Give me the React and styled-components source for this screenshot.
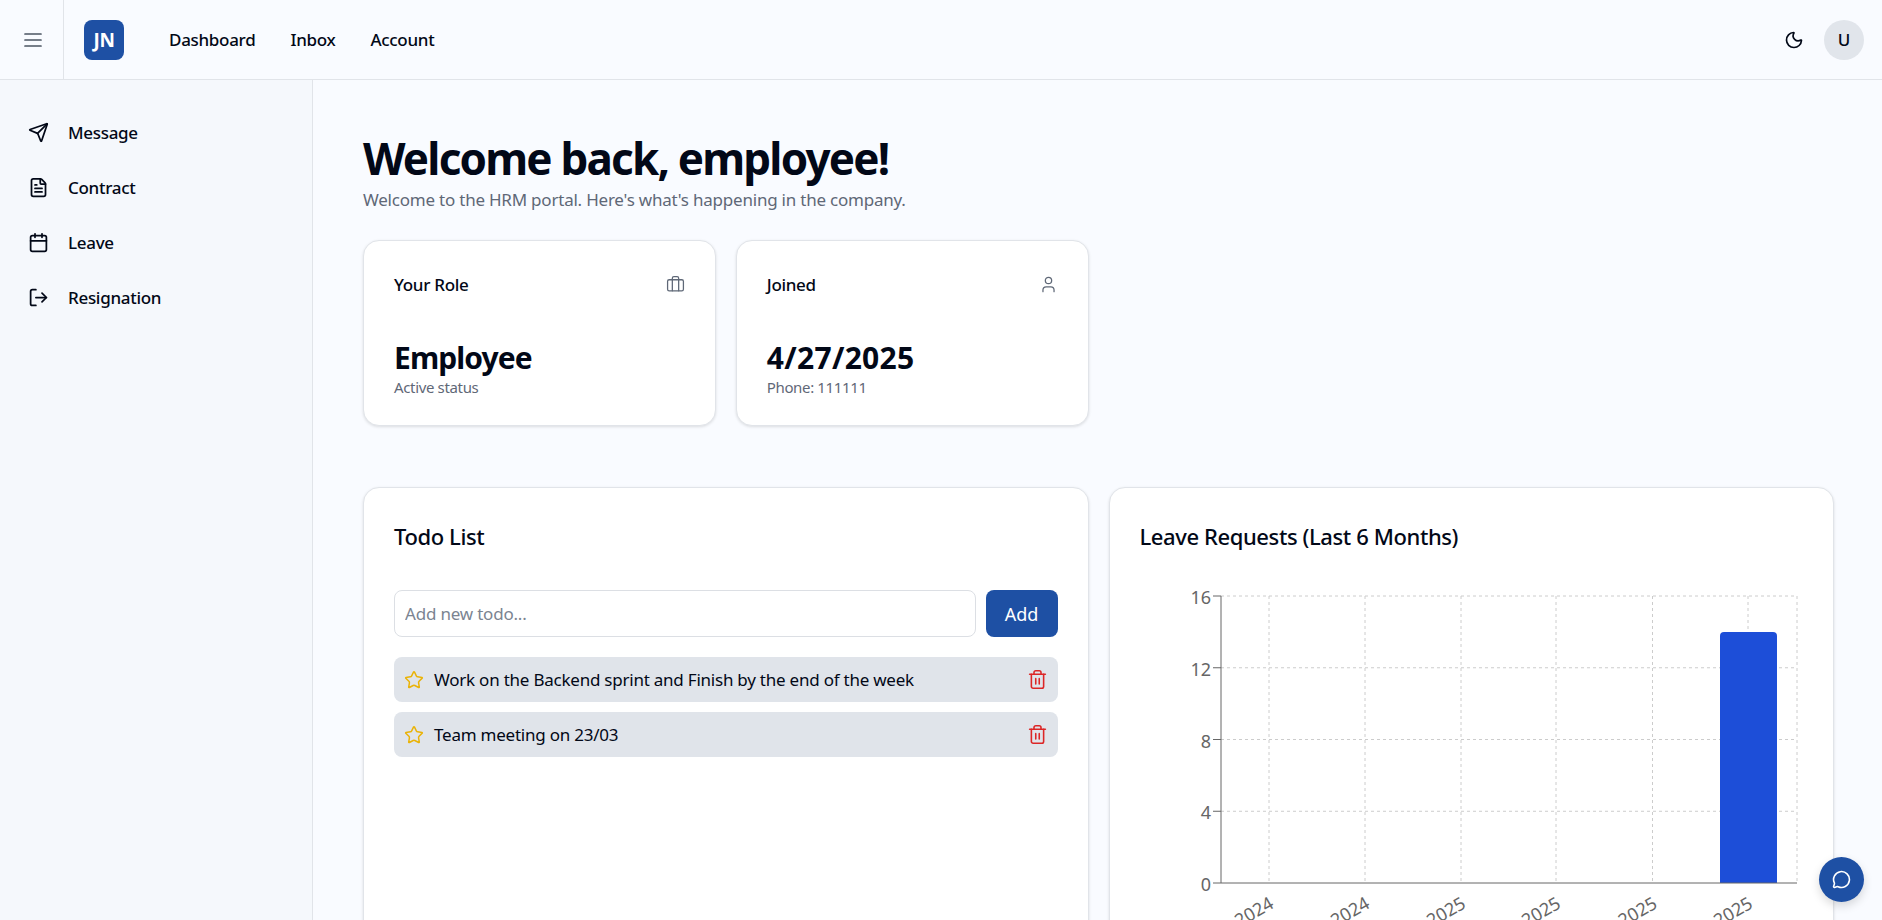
import styled, { createGlobalStyle } from "styled-components";
import { Moon, Send, FileText, Calendar, LogOut, Briefcase, User, Star, Trash2, MessageCircle } from "lucide-react";

const GlobalStyle = createGlobalStyle`
    * { box-sizing: border-box; }
    html, body { margin: 0; padding: 0; height: 100%; overflow: hidden; }
    body {
        font-family: "Noto Sans", "Open Sans", sans-serif;
        color: #020817;
        background: #f9fbff;
    }
`;

const sideLinks = [
    { label: "Message", Icon: Send },
    { label: "Contract", Icon: FileText },
    { label: "Leave", Icon: Calendar },
    { label: "Resignation", Icon: LogOut },
];

const todos = ["Work on the Backend sprint and Finish by the end of the week", "Team meeting on 23/03"];

const months = ["Nov 2024", "Dec 2024", "Jan 2025", "Feb 2025", "Mar 2025", "Apr 2025"];

function LeaveChart() {
    const left = 81, right = 657, top = 16, bottom = 303;
    const ticks = [16, 12, 8, 4, 0];
    const y = v => bottom - (v / 16) * (bottom - top);
    const xs = [129, 225, 321, 416, 512.5, 608];
    return (
        <svg width="662" height="360" viewBox="0 0 662 360">
            <g stroke="#ccc" strokeDasharray="3 3" fill="none">
                {ticks.slice(0, 4).map(v => <line key={v} x1={left} x2={right} y1={y(v)} y2={y(v)} />)}
                {xs.map(x => <line key={x} x1={x} x2={x} y1={top} y2={bottom} />)}
                <line x1={right} x2={right} y1={top} y2={bottom} />
            </g>
            <path d="M580 303V56a4 4 0 0 1 4-4h49a4 4 0 0 1 4 4v247z" fill="#1d4ed8" />
            <g stroke="#666" fill="none">
                <line x1={left} x2={left} y1={top} y2={bottom} />
                <line x1={left} x2={right} y1={bottom} y2={bottom} />
                {ticks.map(v => <line key={v} x1={left - 8} x2={left} y1={y(v)} y2={y(v)} />)}
            </g>
            <g fill="#666" fontSize="18" textAnchor="end">
                {ticks.map(v => <text key={v} x={left - 10} y={y(v) + 8}>{v}</text>)}
                {months.map((m, i) => (
                    <text key={m} x={xs[i] + 6} y={bottom + 24} transform={`rotate(-30 ${xs[i] + 6} ${bottom + 24})`}>{m}</text>
                ))}
            </g>
        </svg>
    );
}

export default function App() {
    return (
        <Page>
            <GlobalStyle />
            <Topbar>
                <MenuToggle>
                    <svg width="24" height="24" viewBox="0 0 24 24" fill="none" stroke="currentColor" strokeWidth="1.7" strokeLinecap="round">
                        <path d="M4 6h16M4 12h16M4 18h16" />
                    </svg>
                </MenuToggle>
                <Logo>JN</Logo>
                <TopNav>
                    <TopLink>Dashboard</TopLink>
                    <TopLink>Inbox</TopLink>
                    <TopLink>Account</TopLink>
                </TopNav>
                <TopActions>
                    <Moon size={20} strokeWidth={2} />
                    <Avatar>U</Avatar>
                </TopActions>
            </Topbar>
            <Body>
                <Sidebar>
                    {sideLinks.map(({ label, Icon }) => (
                        <SideLink key={label}>
                            <Icon size={21} strokeWidth={2} />
                            {label}
                        </SideLink>
                    ))}
                </Sidebar>
                <Main>
                    <Title>Welcome back, employee!</Title>
                    <Subtitle>Welcome to the HRM portal. Here's what's happening in the company.</Subtitle>
                    <StatGrid>
                        <StatCard>
                            <StatHead>
                                <StatLabel>Your Role</StatLabel>
                                <Briefcase size={19} strokeWidth={1.6} color="#5f6877" />
                            </StatHead>
                            <StatValue $spacing={-0.9}>Employee</StatValue>
                            <StatNote>Active status</StatNote>
                        </StatCard>
                        <StatCard>
                            <StatHead>
                                <StatLabel>Joined</StatLabel>
                                <User size={19} strokeWidth={1.6} color="#5f6877" />
                            </StatHead>
                            <StatValue $spacing={0.3}>4/27/2025</StatValue>
                            <StatNote>Phone: 111111</StatNote>
                        </StatCard>
                    </StatGrid>
                    <PanelGrid>
                        <Panel>
                            <PanelTitle>Todo List</PanelTitle>
                            <TodoForm>
                                <TodoInput placeholder="Add new todo..." />
                                <AddButton>Add</AddButton>
                            </TodoForm>
                            <TodoList>
                                {todos.map(todo => (
                                    <TodoRow key={todo}>
                                        <Star size={20} strokeWidth={1.8} color="#eab308" />
                                        <TodoText>{todo}</TodoText>
                                        <Trash2 size={21} strokeWidth={1.8} color="#dc2626" />
                                    </TodoRow>
                                ))}
                            </TodoList>
                        </Panel>
                        <Panel>
                            <PanelTitle>Leave Requests (Last 6 Months)</PanelTitle>
                            <ChartWrap><LeaveChart /></ChartWrap>
                        </Panel>
                    </PanelGrid>
                </Main>
            </Body>
            <ChatButton><MessageCircle size={19} strokeWidth={2} /></ChatButton>
        </Page>
    );
}

const Page = styled.div`
    height: 100vh;
    display: flex;
    flex-direction: column;
    overflow: hidden;
`;

const Topbar = styled.header`
    height: 80px;
    flex-shrink: 0;
    display: flex;
    align-items: center;
    background: #f9fbff;
    border-bottom: 1px solid #e1e4e9;
`;

const MenuToggle = styled.div`
    width: 64px;
    height: 100%;
    padding-left: 3px;
    display: flex;
    align-items: center;
    justify-content: center;
    color: #4b5563;
    border-right: 1px solid #e1e4e9;
`;

const Logo = styled.div`
    width: 40px;
    height: 40px;
    margin-left: 20px;
    border-radius: 8px;
    background: #1e50a4;
    color: #fff;
    font-size: 19px;
    font-weight: 700;
    letter-spacing: -0.3px;
    display: flex;
    align-items: center;
    justify-content: center;
`;

const TopNav = styled.nav`
    display: flex;
    gap: 35px;
    margin-left: 45px;
`;

const TopLink = styled.span`
    font-size: 17px;
    font-weight: 500;
    letter-spacing: -0.3px;
`;

const TopActions = styled.div`
    margin-left: auto;
    margin-right: 18px;
    display: flex;
    align-items: center;
    gap: 20px;
`;

const Avatar = styled.div`
    width: 40px;
    height: 40px;
    border-radius: 50%;
    background: #e1e5eb;
    font-size: 17px;
    font-weight: 500;
    display: flex;
    align-items: center;
    justify-content: center;
`;

const Body = styled.div`
    flex: 1;
    display: flex;
    min-height: 0;
`;

const Sidebar = styled.aside`
    width: 313px;
    flex-shrink: 0;
    padding: 38px 28px;
    background: #f5f8fc;
    border-right: 1px solid #e1e4e9;
    display: flex;
    flex-direction: column;
    gap: 27px;
`;

const SideLink = styled.div`
    height: 28px;
    display: flex;
    align-items: center;
    gap: 19px;
    font-size: 17px;
    font-weight: 500;
    letter-spacing: -0.3px;
`;

const Main = styled.main`
    flex: 1;
    min-width: 0;
    padding: 52px 48px 0 50px;
`;

const Title = styled.h1`
    margin: 0;
    font-size: 44px;
    line-height: 52px;
    font-weight: 700;
    letter-spacing: -1.8px;
`;

const Subtitle = styled.p`
    margin: 4px 0 0;
    font-size: 17px;
    line-height: 24px;
    color: #5f6877;
    letter-spacing: -0.22px;
`;

const StatGrid = styled.div`
    margin-top: 28px;
    display: grid;
    grid-template-columns: repeat(4, minmax(0, 1fr));
    gap: 20px;
`;

const StatCard = styled.section`
    height: 186px;
    padding: 30px;
    background: #fff;
    border: 1px solid #e1e4e9;
    border-radius: 16px;
    box-shadow: 0 1px 3px rgba(0, 0, 0, 0.12);
`;

const StatHead = styled.div`
    height: 26px;
    margin-bottom: 41px;
    display: flex;
    align-items: center;
    justify-content: space-between;
`;

const StatLabel = styled.span`
    font-size: 17px;
    font-weight: 500;
    letter-spacing: -0.3px;
`;

const StatValue = styled.div`
    font-size: 30px;
    line-height: 40px;
    font-weight: 700;
    letter-spacing: ${p => p.$spacing}px;
`;

const StatNote = styled.div`
    font-size: 15px;
    line-height: 18px;
    color: #5f6877;
    letter-spacing: -0.35px;
`;

const PanelGrid = styled.div`
    margin-top: 61px;
    display: grid;
    grid-template-columns: repeat(2, minmax(0, 1fr));
    gap: 20px;
`;

const Panel = styled.section`
    height: 520px;
    padding: 30px;
    background: #fff;
    border: 1px solid #e1e4e9;
    border-radius: 16px;
    box-shadow: 0 1px 3px rgba(0, 0, 0, 0.12);
`;

const PanelTitle = styled.h2`
    margin: 0;
    font-size: 22px;
    line-height: 36px;
    font-weight: 500;
    letter-spacing: -0.4px;
`;

const TodoForm = styled.div`
    margin-top: 36px;
    display: flex;
    gap: 10px;
`;

const TodoInput = styled.input`
    flex: 1;
    min-width: 0;
    height: 47px;
    padding: 0 10px;
    font: inherit;
    font-size: 17px;
    letter-spacing: -0.2px;
    background: #fff;
    border: 1px solid #dcdfe4;
    border-radius: 8px;
    &::placeholder { color: #7b8491; }
`;

const AddButton = styled.div`
    width: 72px;
    height: 47px;
    border-radius: 8px;
    background: #1e50a4;
    color: #fff;
    font-size: 18px;
    font-weight: 400;
    display: flex;
    align-items: center;
    justify-content: center;
`;

const TodoList = styled.div`
    margin-top: 20px;
    display: flex;
    flex-direction: column;
    gap: 10px;
`;

const TodoRow = styled.div`
    height: 45px;
    padding: 0 10px;
    display: flex;
    align-items: center;
    gap: 10px;
    background: #e0e4ea;
    border-radius: 8px;
`;

const TodoText = styled.span`
    flex: 1;
    font-size: 17px;
    letter-spacing: -0.23px;
`;

const ChartWrap = styled.div`
    margin-top: 26px;
`;

const ChatButton = styled.div`
    position: absolute;
    left: 1819px;
    top: 857px;
    width: 45px;
    height: 45px;
    border-radius: 50%;
    background: #1e50a4;
    color: #fff;
    display: flex;
    align-items: center;
    justify-content: center;
    box-shadow: 0 4px 10px rgba(0, 0, 0, 0.15);
`;
